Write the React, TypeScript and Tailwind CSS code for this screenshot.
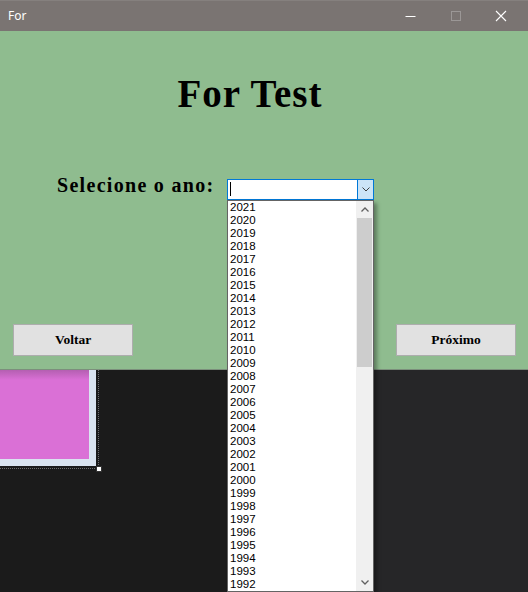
import React from 'react';

const years = Array.from({ length: 30 }, (_, i) => 2021 - i);

const serif = { fontFamily: '"Liberation Serif", "Times New Roman", serif' };

const TitleBar: React.FC = () => (
  <div className="h-[31px] bg-[#7a7472] flex items-center relative border-t border-[#85807e]">
    <span className="pl-[8px] text-[12px] text-white" style={{ fontFamily: '"Noto Sans", "Liberation Sans", sans-serif' }}>
      For
    </span>
    {/* window buttons */}
    <svg className="absolute left-[400px] top-[4px]" width="128" height="24" viewBox="0 0 128 24">
      <line x1="5.5" y1="11.5" x2="15.5" y2="11.5" stroke="#ffffff" strokeWidth="1" />
      <rect x="51.5" y="6.5" width="9" height="9" fill="none" stroke="#9b9796" strokeWidth="1" />
      <path d="M96 6 L106 16 M106 6 L96 16" stroke="#ffffff" strokeWidth="1.1" />
    </svg>
  </div>
);

const Combo: React.FC = () => (
  <div className="w-[147px] h-[21px] border border-[#0078d7] bg-white flex">
    <div className="flex-1 relative">
      <div className="absolute left-[2px] top-[2px] w-px h-[14px] bg-black" />
    </div>
    <div className="w-[16px] h-full bg-[#cce4f7] border-l border-[#0078d7] flex items-center justify-center">
      <svg width="8" height="5" viewBox="0 0 8 5">
        <path d="M0.5 0.5 L4 4 L7.5 0.5" fill="none" stroke="#404040" strokeWidth="1" />
      </svg>
    </div>
  </div>
);

const DropList: React.FC = () => (
  <div className="absolute left-[227px] top-[200px] w-[147px] h-[392px] border border-[#646464] bg-white flex shadow-[3px_3px_4px_rgba(0,0,0,0.35)]">
    <div className="flex-1 flex flex-col pl-[2px]" style={{ fontFamily: '"Liberation Sans", Arial, sans-serif' }}>
      {years.map((y) => (
        <div key={y} className="h-[13px] leading-[13px] text-[11.5px] text-black">
          {y}
        </div>
      ))}
    </div>
    <div className="w-[17px] bg-[#f0f0f0] flex flex-col">
      <div className="h-[17px] flex items-center justify-center">
        <svg width="8" height="5" viewBox="0 0 8 5">
          <path d="M0.5 4.5 L4 1 L7.5 4.5" fill="none" stroke="#606060" strokeWidth="1.3" />
        </svg>
      </div>
      <div className="flex-1 px-[1px]">
        <div className="h-[149px] bg-[#cdcdcd]" />
      </div>
      <div className="h-[17px] flex items-center justify-center">
        <svg width="8" height="5" viewBox="0 0 8 5">
          <path d="M0.5 0.5 L4 4 L7.5 0.5" fill="none" stroke="#606060" strokeWidth="1.3" />
        </svg>
      </div>
    </div>
  </div>
);

const Button: React.FC<{ label: string }> = ({ label }) => (
  <button
    className="w-[120px] h-[32px] bg-[#e1e1e1] border border-[#adadad] text-[13.5px] font-bold text-black flex items-center justify-center"
    style={serif}
  >
    {label}
  </button>
);

export default function App() {
  return (
    <div className="w-[528px] h-[592px] relative overflow-hidden bg-[#1b1b1b]">
      <TitleBar />

      {/* form surface */}
      <div className="h-[339px] bg-[#8fbc8f] border-b border-[#7c8f7c] flex flex-col">
        <div
          className="pt-[43px] pr-[28px] text-center text-[39px] leading-none font-bold text-black tracking-[1px]"
          style={serif}
        >
          For Test
        </div>
        <div className="mt-[66px] flex items-start pl-[57px]">
          <div
            className="w-[170px] mt-[-4px] text-[20px] leading-[21px] font-bold text-black whitespace-nowrap tracking-[1.3px]"
            style={serif}
          >
            Selecione o ano:
          </div>
          <Combo />
        </div>
        <div className="mt-auto pb-[13px] pl-[13px] pr-[12px] flex justify-between">
          <Button label="Voltar" />
          <Button label="Próximo" />
        </div>
      </div>

      {/* designer area below the form */}
      <div className="flex h-[222px]">
        <div className="w-[300px] bg-[#1b1b1b] relative">
          <div className="w-[99px] h-[99px] border-r border-b border-dotted border-[#707070]">
            <div className="w-[96px] h-[96px] bg-[#dae4f0]">
              <div className="w-[89px] h-[89px] bg-[#da70d6] relative">
                <div className="absolute inset-x-0 top-0 h-[10px] bg-linear-to-b from-[#b45fb1] to-transparent" />
              </div>
            </div>
          </div>
          <div className="absolute left-[96px] top-[96px] w-[6px] h-[6px] bg-white border border-[#333]" />
        </div>
        <div className="flex-1 bg-[#262628]" />
      </div>

      <DropList />
    </div>
  );
}
